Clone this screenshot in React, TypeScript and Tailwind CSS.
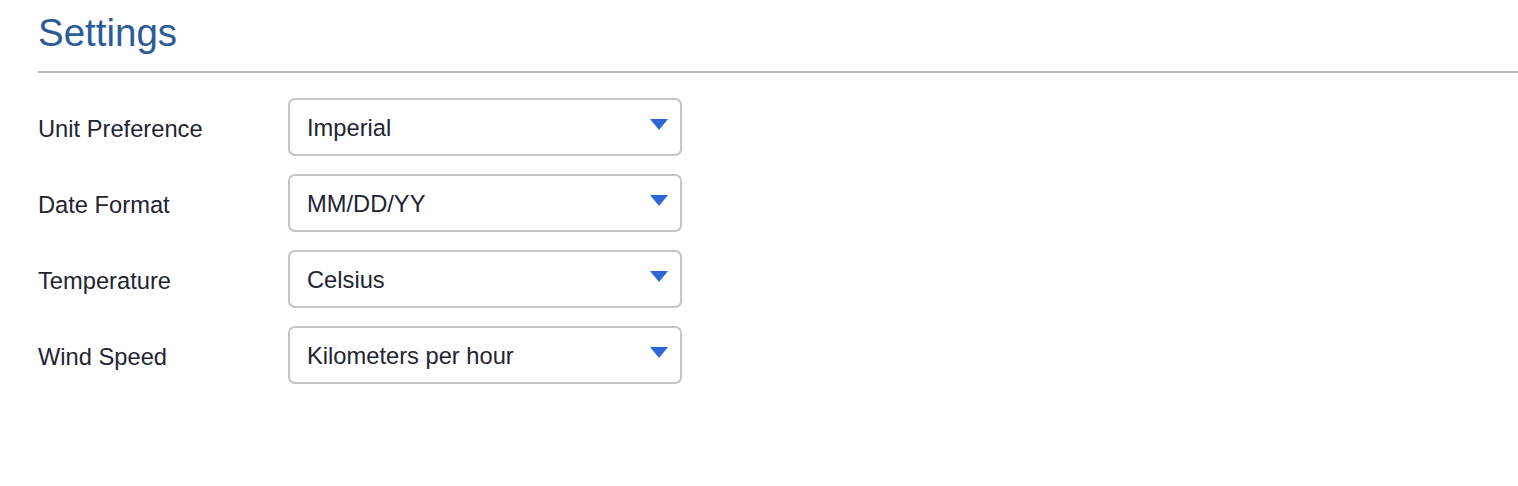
import React from "react";

const rows: [string, string][] = [
  ["Unit Preference", "Imperial"],
  ["Date Format", "MM/DD/YY"],
  ["Temperature", "Celsius"],
  ["Wind Speed", "Kilometers per hour"],
];

function Caret() {
  return (
    <svg width="18" height="11" viewBox="0 0 18 11" className="mb-[5px] shrink-0">
      <polygon points="0,0 18,0 9,11" fill="#2e66d6" />
    </svg>
  );
}

export default function App() {
  return (
    <div
      className="w-[1518px] h-[486px] bg-white pl-[38px] pt-[14px] text-[#1f2433]"
      style={{ fontFamily: '"Liberation Sans", Arial, sans-serif' }}
    >
      <h1 className="text-[38.5px] leading-[38px] text-[#2c5b96]">Settings</h1>
      <div className="mt-[19px] h-[2px] bg-[#b8b8b8]" />
      <div className="mt-[25px] grid grid-cols-[250px_394px] gap-y-[18px]">
        {rows.map(([label, value]) => (
          <React.Fragment key={label}>
            <div className="flex items-center pt-[5px] text-[23.7px]">{label}</div>
            <div className="flex h-[58px] items-center justify-between rounded-[7px] border-2 border-[#c4c4c4] pl-[17px] pr-[12px] text-[23.7px]">
              <span className="pt-[3px]">{value}</span>
              <Caret />
            </div>
          </React.Fragment>
        ))}
      </div>
    </div>
  );
}
